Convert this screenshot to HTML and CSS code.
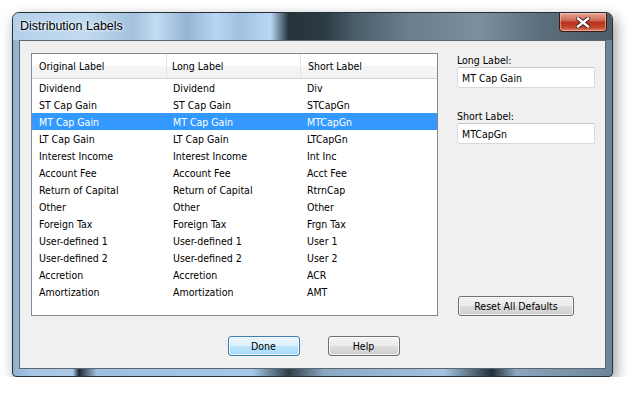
FILE: index.html
```html
<!DOCTYPE html>
<html lang="en">
<head>
    <meta charset="UTF-8">
    <title>Distribution Labels</title>
    <link rel="stylesheet" href="styles.css">
</head>
<body>
    <div class="window">
        <div class="title-bar">
            <span class="title">Distribution Labels</span>
            <button class="close-button">
                <svg width="14" height="11" viewBox="0 0 14 11">
                    <path d="M2 1.5 L12 9.5 M12 1.5 L2 9.5" stroke="#3a1410" stroke-width="4.2" stroke-linecap="square"/>
                    <path d="M2 1.5 L12 9.5 M12 1.5 L2 9.5" stroke="#fff" stroke-width="2.4" stroke-linecap="square"/>
                </svg>
            </button>
        </div>
        <div class="client">
            <div class="main-row">
                <div class="label-list">
                    <div class="list-header">
                        <div>Original Label</div>
                        <div>Long Label</div>
                        <div>Short Label</div>
                    </div>
                    <div class="list-row"><div>Dividend</div><div>Dividend</div><div>Div</div></div>
                    <div class="list-row"><div>ST Cap Gain</div><div>ST Cap Gain</div><div>STCapGn</div></div>
                    <div class="list-row selected"><div>MT Cap Gain</div><div>MT Cap Gain</div><div>MTCapGn</div></div>
                    <div class="list-row"><div>LT Cap Gain</div><div>LT Cap Gain</div><div>LTCapGn</div></div>
                    <div class="list-row"><div>Interest Income</div><div>Interest Income</div><div>Int Inc</div></div>
                    <div class="list-row"><div>Account Fee</div><div>Account Fee</div><div>Acct Fee</div></div>
                    <div class="list-row"><div>Return of Capital</div><div>Return of Capital</div><div>RtrnCap</div></div>
                    <div class="list-row"><div>Other</div><div>Other</div><div>Other</div></div>
                    <div class="list-row"><div>Foreign Tax</div><div>Foreign Tax</div><div>Frgn Tax</div></div>
                    <div class="list-row"><div>User-defined 1</div><div>User-defined 1</div><div>User 1</div></div>
                    <div class="list-row"><div>User-defined 2</div><div>User-defined 2</div><div>User 2</div></div>
                    <div class="list-row"><div>Accretion</div><div>Accretion</div><div>ACR</div></div>
                    <div class="list-row"><div>Amortization</div><div>Amortization</div><div>AMT</div></div>
                </div>
                <div class="side-panel">
                    <label class="field-label">Long Label:</label>
                    <input class="field-input" type="text" value="MT Cap Gain">
                    <label class="field-label second">Short Label:</label>
                    <input class="field-input" type="text" value="MTCapGn">
                    <button class="win-button reset-button">Reset All Defaults</button>
                </div>
            </div>
            <div class="button-row">
                <button class="win-button default">Done</button>
                <button class="win-button">Help</button>
            </div>
        </div>
    </div>
</body>
</html>
```

FILE: styles.css
```css
body {
    margin: 0;
    background-color: #fff;
    font-family: "DejaVu Sans Condensed", "DejaVu Sans", sans-serif;
    font-size: 10.5px;
    color: #000;
}
.window {
    box-sizing: border-box;
    margin: 12px 0 0 12px;
    width: 601px;
    height: 365px;
    padding: 0 6px 7px 6px;
    border: 1px solid #24303a;
    border-radius: 7px 7px 4px 4px;
    background: linear-gradient(90deg, #8eb1d0 0%, #a6c6e4 3%, #a9c9e7 10%, #1f2a33 11%, #9ec0df 14%, #a6c8e6 40%, #2f3d47 46%, #8aa8c2 52%, #a3c3df 72%, #22303a 80%, #8ba6bd 84%, #6d8599 100%);
    box-shadow: 3px 5px 14px rgba(0, 0, 0, 0.4);
}
.title-bar {
    height: 27px;
    margin: 0 -6px;
    display: flex;
    align-items: flex-start;
    border-radius: 6px 6px 0 0;
    background: linear-gradient(90deg, #b3cfe9 0%, #c1daf0 12%, #a3c1de 20%, #c2dcf3 24%, #95b5d3 29%, #b8d6f2 34%, #9fc0df 38%, #b9d8f6 43%, #26333b 46%, #2c3a43 52%, #4a5c69 57%, #697f8f 66%, #7a8f9f 78%, #5d6f7d 88%, #4c5d69 100%);
}
.title {
    font-family: "Liberation Sans", Arial, sans-serif;
    font-size: 12.5px;
    line-height: 27px;
    padding-left: 7px;
    color: #000;
    text-shadow: 0 0 5px rgba(255, 255, 255, 0.9), 0 0 3px rgba(255, 255, 255, 0.8);
}
.close-button {
    margin-left: auto;
    margin-right: 5px;
    width: 48px;
    height: 19px;
    padding: 0;
    border: 1px solid #3d1a14;
    border-top: none;
    border-radius: 0 0 4px 4px;
    background: linear-gradient(180deg, #e8a593 0%, #cf6e5a 40%, #b8311c 52%, #c4482c 80%, #d9826a 100%);
    box-shadow: inset 0 0 0 1px rgba(255, 210, 200, 0.5);
    display: flex;
    align-items: center;
    justify-content: center;
}
.client {
    box-sizing: border-box;
    height: 329px;
    border: 1px solid #5a6672;
    background-color: #f0f0f0;
    padding: 12px 9px 0 11px;
    display: flex;
    flex-direction: column;
}
.main-row {
    display: flex;
    gap: 19px;
}
.label-list {
    box-sizing: border-box;
    width: 407px;
    height: 263px;
    border: 1px solid #828790;
    background-color: #fff;
}
.list-header, .list-row {
    display: grid;
    grid-template-columns: 135px 134px 1fr;
}
.list-header {
    height: 24px;
    border-bottom: 1px solid #d5d5d5;
    background: linear-gradient(180deg, #ffffff 0%, #ffffff 50%, #f4f5f7 51%, #f1f2f4 100%);
}
.list-header div {
    line-height: 24px;
    padding-left: 7px;
    border-right: 1px solid #e3e4e6;
}
.list-header div:nth-child(2) {
    padding-left: 5px;
}
.list-header div:last-child {
    border-right: none;
}
.list-row {
    height: 17px;
    line-height: 18px;
}
.list-row div {
    padding-left: 7px;
}
.list-row div:nth-child(2) {
    padding-left: 6px;
}
.list-row div:nth-child(3) {
    padding-left: 6px;
}
.list-row.selected {
    background-color: #3399ff;
    color: #fff;
}
.side-panel {
    width: 138px;
    display: flex;
    flex-direction: column;
}
.field-label {
    line-height: 14px;
}
.field-label.second {
    margin-top: 21px;
}
.field-input {
    box-sizing: border-box;
    width: 138px;
    height: 21px;
    margin: 0;
    padding: 0 4px;
    border: 1px solid #d6d9de;
    border-top-color: #c4c8ce;
    border-radius: 2px;
    background-color: #fff;
    font-family: inherit;
    font-size: inherit;
    color: #000;
}
.win-button {
    box-sizing: border-box;
    height: 20px;
    padding: 0;
    border: 1px solid #707070;
    border-radius: 3px;
    background: linear-gradient(180deg, #f2f2f2 0%, #ebebeb 50%, #dddddd 51%, #cfcfcf 100%);
    box-shadow: inset 0 0 0 1px rgba(255, 255, 255, 0.7);
    font-family: inherit;
    font-size: inherit;
    color: #000;
}
.reset-button {
    margin-top: auto;
    margin-left: 1px;
    width: 116px;
}
.button-row {
    display: flex;
    justify-content: center;
    gap: 28px;
    margin-top: 20px;
}
.button-row .win-button {
    width: 72px;
}
.win-button.default {
    border-color: #3c7fb1;
    background: linear-gradient(180deg, #eaf6fd 0%, #d9f0fc 50%, #bee6fd 51%, #a7d9f5 100%);
}
```
